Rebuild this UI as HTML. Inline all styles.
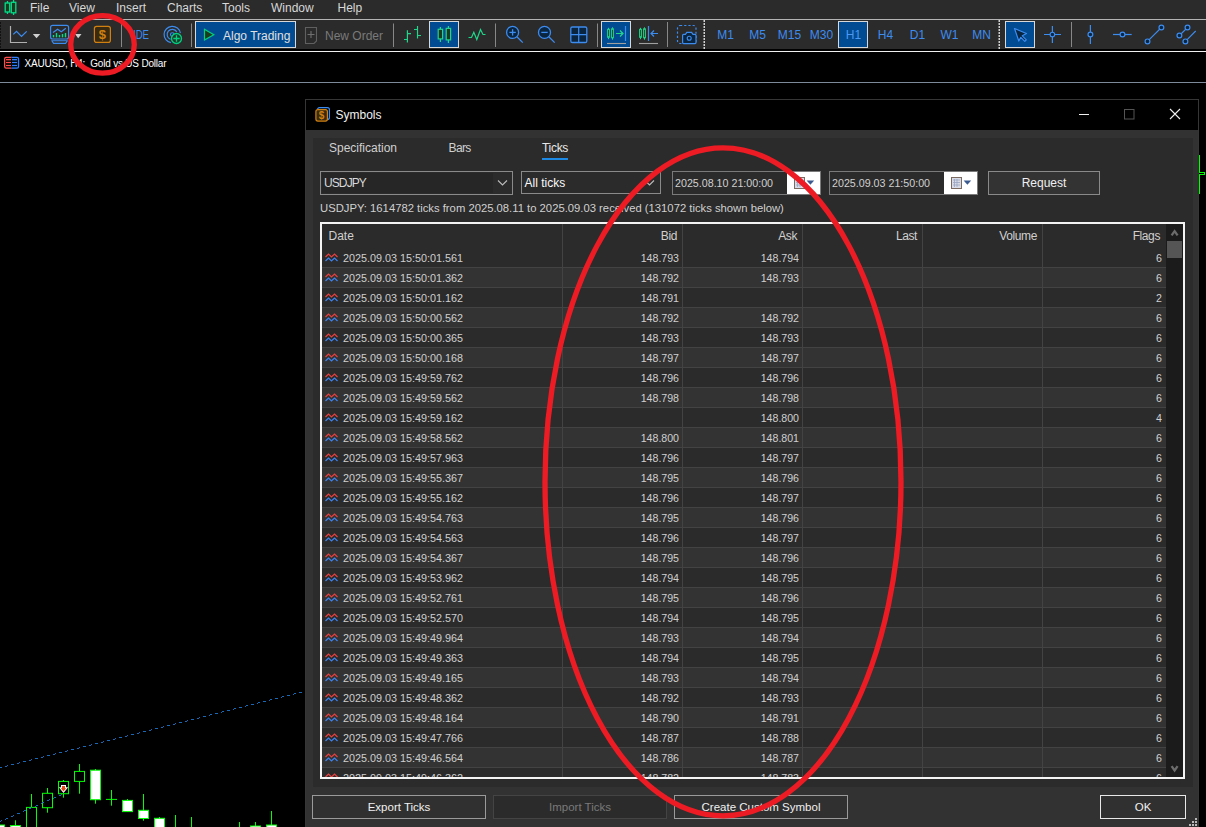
<!DOCTYPE html>
<html><head><meta charset="utf-8"><title>Symbols</title>
<style>
*{margin:0;padding:0;box-sizing:border-box}
html,body{width:1206px;height:827px;overflow:hidden;background:#000}
body{position:relative;font-family:"Liberation Sans",sans-serif;color:#ddd}
.ab{position:absolute}
.t{position:absolute;white-space:pre;line-height:1}
svg{position:absolute;overflow:visible}
</style></head><body>

<div class="ab" style="left:0;top:0;width:1206px;height:19px;background:#2b2b2b"></div>
<div class="ab" style="left:0;top:19px;width:1206px;height:1px;background:#b4b4b4"></div>
<div class="t" style="left:30px;top:2.4px;font-size:12px;color:#d8d8d8">File</div>
<div class="t" style="left:69px;top:2.4px;font-size:12px;color:#d8d8d8">View</div>
<div class="t" style="left:116px;top:2.4px;font-size:12px;color:#d8d8d8">Insert</div>
<div class="t" style="left:167px;top:2.4px;font-size:12px;color:#d8d8d8">Charts</div>
<div class="t" style="left:222px;top:2.4px;font-size:12px;color:#d8d8d8">Tools</div>
<div class="t" style="left:271px;top:2.4px;font-size:12px;color:#d8d8d8">Window</div>
<div class="t" style="left:337.5px;top:2.4px;font-size:12px;color:#d8d8d8">Help</div>
<svg style="left:0;top:0" width="20" height="18">
<g stroke="#00e08a" stroke-width="1.3" fill="#1e3a1e">
<rect x="5.2" y="3" width="4.5" height="9"/><line x1="7.45" y1="1" x2="7.45" y2="3"/><line x1="7.45" y1="12" x2="7.45" y2="14"/>
<rect x="11.3" y="2.3" width="4.5" height="10.5"/><line x1="13.55" y1="0" x2="13.55" y2="2.3"/><line x1="13.55" y1="12.8" x2="13.55" y2="15"/>
</g></svg>
<div class="ab" style="left:0;top:20px;width:1206px;height:29px;background:#2b2b2b"></div>
<div class="ab" style="left:0;top:51px;width:1206px;height:1px;background:#f0f0f0"></div>
<svg style="left:0;top:0" width="1206" height="52"><rect x="0" y="22" width="1" height="2" fill="#111"/><rect x="0" y="25" width="1" height="2" fill="#111"/><rect x="0" y="28" width="1" height="2" fill="#111"/><rect x="0" y="31" width="1" height="2" fill="#111"/><rect x="0" y="34" width="1" height="2" fill="#111"/><rect x="0" y="37" width="1" height="2" fill="#111"/><rect x="0" y="40" width="1" height="2" fill="#111"/><rect x="0" y="43" width="1" height="2" fill="#111"/><rect x="0" y="46" width="1" height="2" fill="#111"/><path d="M10.5 26 V42.5 H27" fill="none" stroke="#b0b0b0" stroke-width="1.2"/><path d="M13.3 34.4 L16.5 31.4 L21.5 36.4 L26.7 31.4" fill="none" stroke="#3c8cf0" stroke-width="1.3"/><path d="M32.8 34 H40.3 L36.5 38.2 Z" fill="#d0d0d0"/><rect x="50.6" y="25.4" width="18" height="13.6" rx="2" fill="none" stroke="#3c8cf0" stroke-width="1.2"/><path d="M51.8 40.8 H67.4 L65.6 43.4 H53.6 Z" fill="none" stroke="#3c8cf0" stroke-width="1.1" stroke-linejoin="round"/><path d="M53 32.6 L57.6 29.3 L61.3 31.7 L65.8 28.2" fill="none" stroke="#3c8cf0" stroke-width="1.2"/><rect x="52.8" y="35" width="1.4" height="2.299999999999997" fill="#00e08a"/><rect x="55.8" y="33" width="1.4" height="4.299999999999997" fill="#00e08a"/><rect x="58.8" y="35" width="1.4" height="2.299999999999997" fill="#00e08a"/><rect x="61.8" y="34" width="1.4" height="3.299999999999997" fill="#00e08a"/><rect x="64.8" y="33" width="1.4" height="4.299999999999997" fill="#00e08a"/><path d="M75 34 H81.5 L78.2 38.2 Z" fill="#d0d0d0"/><rect x="94.4" y="26.4" width="16" height="16" rx="2.2" fill="#3a2a10" stroke="#d08010" stroke-width="1.2"/><text x="102.4" y="39.3" font-family="Liberation Sans" font-size="13" font-weight="bold" fill="#d08010" text-anchor="middle">$</text><line x1="121.5" y1="23.5" x2="121.5" y2="47" stroke="#888" stroke-width="1"/><text x="133" y="39.2" font-family="Liberation Sans" font-size="12.5" fill="#3c8cf0" textLength="16" lengthAdjust="spacingAndGlyphs">IDE</text><path d="M170.88 42.58 A8.2 8.2 0 1 1 180.38 33.08" fill="none" stroke="#3c8cf0" stroke-width="1.2"/><path d="M170.52 39.39 A5.2 5.2 0 1 1 176.80 31.90" fill="none" stroke="#3c8cf0" stroke-width="1.2"/><circle cx="172.3" cy="34.5" r="1.8" fill="#0a2540" stroke="#3c8cf0" stroke-width="1.1"/><circle cx="176.5" cy="38.5" r="5" fill="#1e3a2a" stroke="#00d080" stroke-width="1.3"/><path d="M176.5 35.3 V41.7 M173.3 38.5 H179.7" stroke="#00d080" stroke-width="1.3"/><line x1="191.5" y1="23.5" x2="191.5" y2="47" stroke="#888" stroke-width="1"/><rect x="195.5" y="21.5" width="100" height="26" fill="#004b91" stroke="#d8d8d8" stroke-width="1"/><path d="M204.5 29.3 L213.8 34.7 L204.5 40 Z" fill="#1e3a1e" stroke="#00d080" stroke-width="1.2"/><text x="223" y="39.8" font-family="Liberation Sans" font-size="12" fill="#e0e0e0">Algo Trading</text><path d="M305.5 27.5 H316.5 V41 L314 43.5 H305.5 Z" fill="none" stroke="#606060" stroke-width="1.1"/><path d="M311 31 V38 M307.5 34.5 H314.5" stroke="#707070" stroke-width="1.1"/><text x="325" y="39.8" font-family="Liberation Sans" font-size="12" fill="#7a7a7a">New Order</text><line x1="393.5" y1="23.5" x2="393.5" y2="47" stroke="#888" stroke-width="1"/><path d="M407.4 30.3 V42.5 M404 39.5 H407.4 M407.4 33.6 H411 M417.5 26 V38.5 M414 29.5 H417.5 M417.5 35.5 H421" fill="none" stroke="#20d68a" stroke-width="1.2"/><rect x="429.5" y="21.5" width="29" height="26" fill="#004b91" stroke="#d8d8d8" stroke-width="1"/><path d="M440.4 27 V42 M448.4 26 V43" stroke="#20d68a" stroke-width="1.2"/><rect x="438.2" y="29.3" width="4.4" height="9.6" fill="#1e3a1e" stroke="#20d68a" stroke-width="1.2"/><rect x="446.2" y="28.4" width="4.4" height="11.5" fill="#1e3a1e" stroke="#20d68a" stroke-width="1.2"/><path d="M468.5 37.5 H471.5 L473.8 32.2 L476.8 39.5 L480.5 29.5 L483 34.5 H485.5" fill="none" stroke="#20d68a" stroke-width="1.2"/><line x1="495.5" y1="23.5" x2="495.5" y2="47" stroke="#888" stroke-width="1"/><line x1="516.9" y1="36.7" x2="522.8000000000001" y2="42.6" stroke="#3c8cf0" stroke-width="1.3"/><circle cx="512.6" cy="32.4" r="6" fill="#0a2540" stroke="#3c8cf0" stroke-width="1.3"/><path d="M509.40000000000003 32.4 H515.8000000000001" stroke="#3c8cf0" stroke-width="1.3"/><path d="M512.6 29.2 V35.6" stroke="#3c8cf0" stroke-width="1.3"/><line x1="548.8" y1="36.7" x2="554.7" y2="42.6" stroke="#3c8cf0" stroke-width="1.3"/><circle cx="544.5" cy="32.4" r="6" fill="#0a2540" stroke="#3c8cf0" stroke-width="1.3"/><path d="M541.3 32.4 H547.7" stroke="#3c8cf0" stroke-width="1.3"/><rect x="570.8" y="27" width="16" height="15.5" rx="1.6" fill="#0a2540" stroke="#3c8cf0" stroke-width="1.3"/><path d="M578.7 27 V42.5 M570.8 34.7 H586.8" stroke="#3c8cf0" stroke-width="1.2"/><line x1="597.5" y1="23.5" x2="597.5" y2="47" stroke="#888" stroke-width="1"/><rect x="601.5" y="21.5" width="29" height="26" fill="#004b91" stroke="#d8d8d8" stroke-width="1"/><path d="M608.5 27.8 V39.2 M612.5 27.3 V39.7" stroke="#20d68a" stroke-width="1"/><rect x="607.6" y="29.3" width="1.8" height="8" fill="#1e3a1e" stroke="#20d68a" stroke-width="1"/><rect x="611.6" y="28.8" width="1.8" height="9" fill="#1e3a1e" stroke="#20d68a" stroke-width="1"/><path d="M616 33.5 H623 M620 30.5 L623 33.5 L620 36.5" fill="none" stroke="#20d68a" stroke-width="1.2"/><line x1="625.5" y1="26" x2="625.5" y2="41" stroke="#3c8cf0" stroke-width="1.2"/><line x1="607" y1="43.5" x2="626" y2="43.5" stroke="#a0a0a0" stroke-width="1.1"/><path d="M640.5 27.8 V39.2 M644.5 27.3 V39.7" stroke="#20d68a" stroke-width="1"/><rect x="639.6" y="29.3" width="1.8" height="8" fill="#1e3a1e" stroke="#20d68a" stroke-width="1"/><rect x="643.6" y="28.8" width="1.8" height="9" fill="#1e3a1e" stroke="#20d68a" stroke-width="1"/><line x1="648.5" y1="26" x2="648.5" y2="41" stroke="#3c8cf0" stroke-width="1.2"/><path d="M651 33.5 H658 M654 30.5 L651 33.5 L654 36.5" fill="none" stroke="#3c8cf0" stroke-width="1.2"/><line x1="639" y1="43.5" x2="658" y2="43.5" stroke="#a0a0a0" stroke-width="1.1"/><line x1="667.5" y1="22" x2="667.5" y2="47" stroke="#888" stroke-width="1"/><rect x="677.5" y="25.5" width="18.5" height="18" rx="2.5" fill="none" stroke="#3c8cf0" stroke-width="1.2" stroke-dasharray="2.2 2"/><path d="M682.6 35.3 Q682.6 34.4 683.6 34.4 H685.4 L686.8 32.4 H691.6 L693 34.4 H695 Q696 34.4 696 35.4 V42.6 Q696 43.6 695 43.6 H683.6 Q682.6 43.6 682.6 42.6 Z" fill="#0a2540" stroke="#3c8cf0" stroke-width="1.2"/><circle cx="689.2" cy="38.3" r="2" fill="none" stroke="#3c8cf0" stroke-width="1.1"/><rect x="703.5" y="20" width="1.5" height="2" fill="#d0d0d0"/><rect x="703.5" y="23" width="1.5" height="2" fill="#d0d0d0"/><rect x="703.5" y="26" width="1.5" height="2" fill="#d0d0d0"/><rect x="703.5" y="29" width="1.5" height="2" fill="#d0d0d0"/><rect x="703.5" y="32" width="1.5" height="2" fill="#d0d0d0"/><rect x="703.5" y="35" width="1.5" height="2" fill="#d0d0d0"/><rect x="703.5" y="38" width="1.5" height="2" fill="#d0d0d0"/><rect x="703.5" y="41" width="1.5" height="2" fill="#d0d0d0"/><rect x="703.5" y="44" width="1.5" height="2" fill="#d0d0d0"/><rect x="703.5" y="47" width="1.5" height="2" fill="#d0d0d0"/><rect x="998.5" y="20" width="1.5" height="2" fill="#d0d0d0"/><rect x="998.5" y="23" width="1.5" height="2" fill="#d0d0d0"/><rect x="998.5" y="26" width="1.5" height="2" fill="#d0d0d0"/><rect x="998.5" y="29" width="1.5" height="2" fill="#d0d0d0"/><rect x="998.5" y="32" width="1.5" height="2" fill="#d0d0d0"/><rect x="998.5" y="35" width="1.5" height="2" fill="#d0d0d0"/><rect x="998.5" y="38" width="1.5" height="2" fill="#d0d0d0"/><rect x="998.5" y="41" width="1.5" height="2" fill="#d0d0d0"/><rect x="998.5" y="44" width="1.5" height="2" fill="#d0d0d0"/><rect x="998.5" y="47" width="1.5" height="2" fill="#d0d0d0"/><text x="725.5" y="39" font-family="Liberation Sans" font-size="12" fill="#3c8cf0" text-anchor="middle">M1</text><text x="757.5" y="39" font-family="Liberation Sans" font-size="12" fill="#3c8cf0" text-anchor="middle">M5</text><text x="789.5" y="39" font-family="Liberation Sans" font-size="12" fill="#3c8cf0" text-anchor="middle">M15</text><text x="821.5" y="39" font-family="Liberation Sans" font-size="12" fill="#3c8cf0" text-anchor="middle">M30</text><rect x="838.5" y="21.5" width="29" height="26" fill="#004b91" stroke="#d8d8d8" stroke-width="1"/><text x="853.5" y="39" font-family="Liberation Sans" font-size="12" fill="#4a9af5" text-anchor="middle">H1</text><text x="885.5" y="39" font-family="Liberation Sans" font-size="12" fill="#3c8cf0" text-anchor="middle">H4</text><text x="917.5" y="39" font-family="Liberation Sans" font-size="12" fill="#3c8cf0" text-anchor="middle">D1</text><text x="949.5" y="39" font-family="Liberation Sans" font-size="12" fill="#3c8cf0" text-anchor="middle">W1</text><text x="981.5" y="39" font-family="Liberation Sans" font-size="12" fill="#3c8cf0" text-anchor="middle">MN</text><rect x="1005.5" y="21.5" width="29" height="26" fill="#004b91" stroke="#d8d8d8" stroke-width="1"/><path d="M1014.5 28.5 L1026.5 33.5 L1022.3 35.8 L1026.3 39.8 L1024.8 41.3 L1020.8 37.3 L1018.8 41 Z" fill="#0a2540" stroke="#3c8cf0" stroke-width="1.2" stroke-linejoin="round"/><path d="M1044 34.5 H1061 M1052.4 26 V43" stroke="#3c8cf0" stroke-width="1.2"/><circle cx="1052.4" cy="34.5" r="2.3" fill="#0a2540" stroke="#3c8cf0" stroke-width="1.1"/><line x1="1071.5" y1="22" x2="1071.5" y2="47" stroke="#888" stroke-width="1"/><path d="M1090.4 25 V44" stroke="#3c8cf0" stroke-width="1.2"/><circle cx="1090.4" cy="34.5" r="2.4" fill="#0a2540" stroke="#3c8cf0" stroke-width="1.2"/><path d="M1113 34.5 H1131.7" stroke="#3c8cf0" stroke-width="1.2"/><circle cx="1122.5" cy="34.5" r="2.4" fill="#0a2540" stroke="#3c8cf0" stroke-width="1.2"/><path d="M1147.5 41.4 L1161.4 27.5" stroke="#3c8cf0" stroke-width="1.1"/><circle cx="1147.5" cy="41.4" r="2.4" fill="#0a2540" stroke="#3c8cf0" stroke-width="1.2"/><circle cx="1161.4" cy="27.5" r="2.4" fill="#0a2540" stroke="#3c8cf0" stroke-width="1.2"/><path d="M1179.4 35.5 L1187.5 27.5 M1185.4 41.4 L1195.7 31" stroke="#3c8cf0" stroke-width="1.1"/><circle cx="1179.4" cy="35.5" r="2.4" fill="#0a2540" stroke="#3c8cf0" stroke-width="1.2"/><circle cx="1187.5" cy="27.5" r="2.4" fill="#0a2540" stroke="#3c8cf0" stroke-width="1.2"/><circle cx="1185.4" cy="41.4" r="2.4" fill="#0a2540" stroke="#3c8cf0" stroke-width="1.2"/></svg>
<svg style="left:0;top:52px" width="22" height="20">
<defs><clipPath id="cl"><rect x="0" y="0" width="11.6" height="20"/></clipPath><clipPath id="cr"><rect x="11.6" y="0" width="11" height="20"/></clipPath></defs>
<rect x="4.6" y="5.3" width="14" height="10.8" rx="1.6" fill="#1a0a08" stroke="#ff5050" stroke-width="1.2" clip-path="url(#cl)"/>
<rect x="4.6" y="5.3" width="14" height="10.8" rx="1.6" fill="#001428" stroke="#3080ff" stroke-width="1.2" clip-path="url(#cr)"/>
<path d="M6 7.6 H11 M6 10.5 H11 M6 13.5 H11" stroke="#ff5050" stroke-width="1.1"/>
<path d="M12 7.6 H17 M12 10.5 H17 M12 13.5 H17" stroke="#3080ff" stroke-width="1.1"/>
</svg>
<div class="t" style="left:24.5px;top:59px;font-size:10px;color:#fff;letter-spacing:-0.2px">XAUUSD, H4:  Gold vs US Dollar</div>
<div class="ab" style="left:0;top:82px;width:1206px;height:1px;background:#7c8a9a"></div>
<svg style="left:0;top:0" width="1206" height="827"><line x1="-0.5" y1="822" x2="-0.5" y2="840" stroke="#00ff00" stroke-width="1"/><rect x="-5.5" y="825" width="10" height="15" fill="#fff" stroke="#00ff00" stroke-width="1"/><line x1="15.5" y1="820.3" x2="15.5" y2="840" stroke="#00ff00" stroke-width="1"/><rect x="10.5" y="825.6" width="10" height="14.399999999999977" fill="#fff" stroke="#00ff00" stroke-width="1"/><line x1="31.5" y1="794" x2="31.5" y2="840" stroke="#00ff00" stroke-width="1"/><rect x="26.5" y="807.4" width="10" height="32.60000000000002" fill="#000" stroke="#00ff00" stroke-width="1"/><line x1="47.5" y1="788" x2="47.5" y2="812.7" stroke="#00ff00" stroke-width="1"/><rect x="42.5" y="793.3" width="10" height="14.400000000000091" fill="#000" stroke="#00ff00" stroke-width="1"/><line x1="63.5" y1="780" x2="63.5" y2="797.7" stroke="#00ff00" stroke-width="1"/><rect x="58.5" y="781.4" width="10" height="12.300000000000068" fill="#000" stroke="#00ff00" stroke-width="1"/><line x1="79.5" y1="764" x2="79.5" y2="793.7" stroke="#00ff00" stroke-width="1"/><rect x="74.5" y="771.4" width="10" height="10.0" fill="#000" stroke="#00ff00" stroke-width="1"/><line x1="95.5" y1="769" x2="95.5" y2="803.7" stroke="#00ff00" stroke-width="1"/><rect x="90.5" y="770.2" width="10" height="29.5" fill="#fff" stroke="#00ff00" stroke-width="1"/><line x1="111.5" y1="790" x2="111.5" y2="805.7" stroke="#00ff00" stroke-width="1"/><line x1="106.0" y1="799.4" x2="117.0" y2="799.4" stroke="#00ff00" stroke-width="1"/><line x1="127.5" y1="799" x2="127.5" y2="811.6" stroke="#00ff00" stroke-width="1"/><rect x="122.5" y="800.4" width="10" height="11.200000000000045" fill="#fff" stroke="#00ff00" stroke-width="1"/><line x1="143.5" y1="794" x2="143.5" y2="820.7" stroke="#00ff00" stroke-width="1"/><rect x="138.5" y="810.3" width="10" height="8.200000000000045" fill="#fff" stroke="#00ff00" stroke-width="1"/><line x1="159.5" y1="817" x2="159.5" y2="840" stroke="#00ff00" stroke-width="1"/><rect x="154.5" y="818.3" width="10" height="21.700000000000045" fill="#fff" stroke="#00ff00" stroke-width="1"/><line x1="175.5" y1="815" x2="175.5" y2="840" stroke="#00ff00" stroke-width="1"/><rect x="170.5" y="840" width="10" height="0" fill="#000" stroke="#00ff00" stroke-width="1"/><line x1="191.5" y1="817" x2="191.5" y2="840" stroke="#00ff00" stroke-width="1"/><rect x="186.5" y="840" width="10" height="0" fill="#000" stroke="#00ff00" stroke-width="1"/><line x1="239.5" y1="822" x2="239.5" y2="840" stroke="#00ff00" stroke-width="1"/><rect x="234.5" y="840" width="10" height="0" fill="#000" stroke="#00ff00" stroke-width="1"/><line x1="255.5" y1="822" x2="255.5" y2="840" stroke="#00ff00" stroke-width="1"/><rect x="250.5" y="826" width="10" height="14" fill="#fff" stroke="#00ff00" stroke-width="1"/><line x1="271.5" y1="811" x2="271.5" y2="840" stroke="#00ff00" stroke-width="1"/><rect x="266.5" y="825" width="10" height="15" fill="#fff" stroke="#00ff00" stroke-width="1"/><path d="M0 767h1v1h-1zM1 767h1v1h-1zM5 766h1v1h-1zM6 766h1v1h-1zM7 765h1v1h-1zM11 764h1v1h-1zM12 764h1v1h-1zM13 764h1v1h-1zM17 763h1v1h-1zM18 763h1v1h-1zM19 762h1v1h-1zM23 761h1v1h-1zM24 761h1v1h-1zM25 761h1v1h-1zM29 760h1v1h-1zM30 760h1v1h-1zM31 759h1v1h-1zM35 758h1v1h-1zM36 758h1v1h-1zM37 758h1v1h-1zM41 757h1v1h-1zM42 757h1v1h-1zM43 756h1v1h-1zM47 755h1v1h-1zM48 755h1v1h-1zM49 755h1v1h-1zM53 754h1v1h-1zM54 754h1v1h-1zM55 753h1v1h-1zM59 752h1v1h-1zM60 752h1v1h-1zM61 752h1v1h-1zM65 751h1v1h-1zM66 751h1v1h-1zM67 750h1v1h-1zM71 749h1v1h-1zM72 749h1v1h-1zM73 749h1v1h-1zM77 748h1v1h-1zM78 748h1v1h-1zM79 747h1v1h-1zM83 746h1v1h-1zM84 746h1v1h-1zM85 746h1v1h-1zM89 745h1v1h-1zM90 745h1v1h-1zM91 744h1v1h-1zM95 743h1v1h-1zM96 743h1v1h-1zM97 743h1v1h-1zM101 742h1v1h-1zM102 742h1v1h-1zM103 741h1v1h-1zM107 740h1v1h-1zM108 740h1v1h-1zM109 740h1v1h-1zM113 739h1v1h-1zM114 739h1v1h-1zM115 738h1v1h-1zM119 737h1v1h-1zM120 737h1v1h-1zM121 737h1v1h-1zM125 736h1v1h-1zM126 736h1v1h-1zM127 735h1v1h-1zM131 734h1v1h-1zM132 734h1v1h-1zM133 734h1v1h-1zM137 733h1v1h-1zM138 733h1v1h-1zM139 732h1v1h-1zM143 731h1v1h-1zM144 731h1v1h-1zM145 731h1v1h-1zM149 730h1v1h-1zM150 730h1v1h-1zM151 729h1v1h-1zM155 728h1v1h-1zM156 728h1v1h-1zM157 728h1v1h-1zM161 727h1v1h-1zM162 727h1v1h-1zM163 726h1v1h-1zM167 725h1v1h-1zM168 725h1v1h-1zM169 725h1v1h-1zM173 724h1v1h-1zM174 724h1v1h-1zM175 723h1v1h-1zM179 722h1v1h-1zM180 722h1v1h-1zM181 722h1v1h-1zM185 721h1v1h-1zM186 721h1v1h-1zM187 720h1v1h-1zM191 719h1v1h-1zM192 719h1v1h-1zM193 719h1v1h-1zM197 718h1v1h-1zM198 718h1v1h-1zM199 717h1v1h-1zM203 716h1v1h-1zM204 716h1v1h-1zM205 716h1v1h-1zM209 715h1v1h-1zM210 714h1v1h-1zM211 714h1v1h-1zM215 713h1v1h-1zM216 713h1v1h-1zM217 713h1v1h-1zM221 712h1v1h-1zM222 711h1v1h-1zM223 711h1v1h-1zM227 710h1v1h-1zM228 710h1v1h-1zM229 710h1v1h-1zM233 709h1v1h-1zM234 708h1v1h-1zM235 708h1v1h-1zM239 707h1v1h-1zM240 707h1v1h-1zM241 707h1v1h-1zM245 706h1v1h-1zM246 705h1v1h-1zM247 705h1v1h-1zM251 704h1v1h-1zM252 704h1v1h-1zM253 704h1v1h-1zM257 703h1v1h-1zM258 702h1v1h-1zM259 702h1v1h-1zM263 701h1v1h-1zM264 701h1v1h-1zM265 701h1v1h-1zM269 700h1v1h-1zM270 699h1v1h-1zM271 699h1v1h-1zM275 698h1v1h-1zM276 698h1v1h-1zM277 698h1v1h-1zM281 697h1v1h-1zM282 696h1v1h-1zM283 696h1v1h-1zM287 695h1v1h-1zM288 695h1v1h-1zM289 695h1v1h-1zM293 694h1v1h-1zM294 693h1v1h-1zM295 693h1v1h-1zM299 692h1v1h-1zM300 692h1v1h-1zM301 692h1v1h-1zM0 821h1v1h-1zM1 820h1v1h-1zM5 819h1v1h-1zM6 818h1v1h-1zM7 818h1v1h-1zM11 816h1v1h-1zM12 816h1v1h-1zM13 815h1v1h-1zM17 813h1v1h-1zM18 813h1v1h-1zM19 813h1v1h-1zM23 811h1v1h-1zM24 810h1v1h-1zM25 810h1v1h-1zM29 808h1v1h-1zM30 808h1v1h-1zM31 807h1v1h-1zM35 806h1v1h-1zM36 805h1v1h-1zM37 805h1v1h-1zM41 803h1v1h-1zM42 802h1v1h-1zM43 802h1v1h-1zM47 800h1v1h-1zM48 800h1v1h-1zM49 799h1v1h-1zM53 798h1v1h-1zM54 797h1v1h-1zM55 797h1v1h-1zM59 795h1v1h-1zM60 795h1v1h-1zM61 794h1v1h-1z" fill="#1868b8"/><path d="M61 785 H66 V787.3 H68.2 L63.5 793 L58.8 787.3 H61 Z" fill="#fff"/><path d="M62 786 H65 V788.3 H66.2 L63.5 791.6 L60.8 788.3 H62 Z" fill="#e84818"/><line x1="1199.5" y1="155" x2="1199.5" y2="194" stroke="#00ff00" stroke-width="1"/><rect x="1194.5" y="172.5" width="10" height="2" fill="#000" stroke="#00ff00" stroke-width="1"/></svg>
<div class="ab" style="left:305px;top:99px;width:894px;height:740px;background:#323232;border:1px solid #363636"></div>
<div class="ab" style="left:306px;top:100px;width:892px;height:30px;background:#000"></div>
<div class="ab" style="left:313px;top:138px;width:880px;height:649px;background:#2b2b2b"></div>
<svg style="left:310px;top:102px" width="30" height="26">
<rect x="7.6" y="5.6" width="11.8" height="11.8" rx="2" fill="#000" stroke="#3c8cf0" stroke-width="1.2"/>
<rect x="5.9" y="7.6" width="11.5" height="11.5" rx="2" fill="#3a2a10" stroke="#d08010" stroke-width="1.2"/>
<text x="11.65" y="17.2" font-family="Liberation Sans" font-size="10" font-weight="bold" fill="#d08010" text-anchor="middle">$</text>
</svg>
<div class="t" style="left:335.5px;top:109px;font-size:12px;color:#f0f0f0">Symbols</div>
<svg style="left:1060px;top:100px" width="138" height="30">
<line x1="1079" y1="114.5" x2="1089" y2="114.5" stroke="#f0f0f0" stroke-width="1" transform="translate(-1060,-100)"/>
<rect x="1124.5" y="109.5" width="9.5" height="9.5" fill="none" stroke="#555" stroke-width="1" transform="translate(-1060,-100)"/>
<path d="M1170 109 L1180 119 M1180 109 L1170 119" stroke="#f0f0f0" stroke-width="1.1" transform="translate(-1060,-100)"/>
</svg>
<div class="t" style="left:329px;top:142px;font-size:12px;color:#d0d0d0">Specification</div>
<div class="t" style="left:448.5px;top:142px;font-size:12px;letter-spacing:-0.6px;color:#d0d0d0">Bars</div>
<div class="t" style="left:542px;top:142px;font-size:12px;letter-spacing:-0.3px;color:#e8e8e8">Ticks</div>
<div class="ab" style="left:542px;top:158px;width:26px;height:2px;background:#1e88e5"></div>
<div class="ab" style="left:320px;top:171px;width:193px;height:24px;border:1px solid #8a8a8a;background:#2b2b2b"></div>
<div class="ab" style="left:322px;top:173px;width:171px;height:20px;background:#262626"></div>
<div class="t" style="left:324px;top:177px;font-size:12px;letter-spacing:-0.9px;color:#d8d8d8">USDJPY</div>
<svg style="left:496px;top:178px" width="14" height="10"><path d="M2 2.5 L6.5 7 L11 2.5" fill="none" stroke="#bbb" stroke-width="1.1"/></svg>
<div class="ab" style="left:521px;top:171px;width:140px;height:23px;border:1px solid #8a8a8a;background:#2b2b2b"></div>
<div class="t" style="left:524.5px;top:177px;font-size:12px;color:#fafafa">All ticks</div>
<svg style="left:643px;top:178px" width="14" height="10"><path d="M2 2.5 L6.5 7 L11 2.5" fill="none" stroke="#bbb" stroke-width="1.1"/></svg>
<div class="ab" style="left:672px;top:171px;width:149px;height:24px;border:1px solid #7a7a7a;background:#2b2b2b"></div>
<div class="ab" style="left:787px;top:172px;width:33px;height:22px;background:#fff"></div>
<div class="t" style="left:675px;top:178px;font-size:10.7px;color:#d0d0d0">2025.08.10 21:00:00</div>
<svg style="left:787px;top:172px" width="33" height="22">
<rect x="7.5" y="5.5" width="10" height="11" fill="#d8dce8" stroke="#7a6a60" stroke-width="1"/>
<path d="M9 8 H16 M9 10.5 H16 M9 13 H16 M10.5 7 V15 M13 7 V15" stroke="#9aa4c0" stroke-width="0.8"/>
<path d="M19.6 8.6 H27.2 L23.4 12.8 Z" fill="#3a5a90"/>
</svg>
<div class="ab" style="left:829px;top:171px;width:149px;height:24px;border:1px solid #7a7a7a;background:#2b2b2b"></div>
<div class="ab" style="left:944px;top:172px;width:33px;height:22px;background:#fff"></div>
<div class="t" style="left:832px;top:178px;font-size:10.7px;color:#d0d0d0">2025.09.03 21:50:00</div>
<svg style="left:944px;top:172px" width="33" height="22">
<rect x="7.5" y="5.5" width="10" height="11" fill="#d8dce8" stroke="#7a6a60" stroke-width="1"/>
<path d="M9 8 H16 M9 10.5 H16 M9 13 H16 M10.5 7 V15 M13 7 V15" stroke="#9aa4c0" stroke-width="0.8"/>
<path d="M19.6 8.6 H27.2 L23.4 12.8 Z" fill="#3a5a90"/>
</svg>
<div class="ab" style="left:988px;top:171px;width:112px;height:24px;border:1px solid #8a8a8a;background:#333"></div>
<div class="t" style="left:988px;top:177px;width:112px;text-align:center;font-size:12px;color:#f0f0f0">Request</div>
<div class="t" style="left:320px;top:203px;font-size:11.27px;color:#d0d0d0">USDJPY: 1614782 ticks from 2025.08.11 to 2025.09.03 received (131072 ticks shown below)</div>
<div class="ab" style="left:320px;top:222px;width:865px;height:557px;border:2px solid #f4f4f4;background:#2b2b2b;overflow:hidden">
<div class="ab" style="left:0;top:23px;width:844px;height:20px;background:#2b2b2b"></div><div class="ab" style="left:0;top:43px;width:844px;height:20px;background:#333333"></div><div class="ab" style="left:0;top:63px;width:844px;height:20px;background:#2b2b2b"></div><div class="ab" style="left:0;top:83px;width:844px;height:20px;background:#333333"></div><div class="ab" style="left:0;top:103px;width:844px;height:20px;background:#2b2b2b"></div><div class="ab" style="left:0;top:123px;width:844px;height:20px;background:#333333"></div><div class="ab" style="left:0;top:143px;width:844px;height:20px;background:#2b2b2b"></div><div class="ab" style="left:0;top:163px;width:844px;height:20px;background:#333333"></div><div class="ab" style="left:0;top:183px;width:844px;height:20px;background:#2b2b2b"></div><div class="ab" style="left:0;top:203px;width:844px;height:20px;background:#333333"></div><div class="ab" style="left:0;top:223px;width:844px;height:20px;background:#2b2b2b"></div><div class="ab" style="left:0;top:243px;width:844px;height:20px;background:#333333"></div><div class="ab" style="left:0;top:263px;width:844px;height:20px;background:#2b2b2b"></div><div class="ab" style="left:0;top:283px;width:844px;height:20px;background:#333333"></div><div class="ab" style="left:0;top:303px;width:844px;height:20px;background:#2b2b2b"></div><div class="ab" style="left:0;top:323px;width:844px;height:20px;background:#333333"></div><div class="ab" style="left:0;top:343px;width:844px;height:20px;background:#2b2b2b"></div><div class="ab" style="left:0;top:363px;width:844px;height:20px;background:#333333"></div><div class="ab" style="left:0;top:383px;width:844px;height:20px;background:#2b2b2b"></div><div class="ab" style="left:0;top:403px;width:844px;height:20px;background:#333333"></div><div class="ab" style="left:0;top:423px;width:844px;height:20px;background:#2b2b2b"></div><div class="ab" style="left:0;top:443px;width:844px;height:20px;background:#333333"></div><div class="ab" style="left:0;top:463px;width:844px;height:20px;background:#2b2b2b"></div><div class="ab" style="left:0;top:483px;width:844px;height:20px;background:#333333"></div><div class="ab" style="left:0;top:503px;width:844px;height:20px;background:#2b2b2b"></div><div class="ab" style="left:0;top:523px;width:844px;height:20px;background:#333333"></div><div class="ab" style="left:0;top:543px;width:844px;height:20px;background:#2b2b2b"></div><div class="ab" style="left:0;top:43px;width:844px;height:1px;background:#434343"></div><div class="ab" style="left:0;top:63px;width:844px;height:1px;background:#434343"></div><div class="ab" style="left:0;top:83px;width:844px;height:1px;background:#434343"></div><div class="ab" style="left:0;top:103px;width:844px;height:1px;background:#434343"></div><div class="ab" style="left:0;top:123px;width:844px;height:1px;background:#434343"></div><div class="ab" style="left:0;top:143px;width:844px;height:1px;background:#434343"></div><div class="ab" style="left:0;top:163px;width:844px;height:1px;background:#434343"></div><div class="ab" style="left:0;top:183px;width:844px;height:1px;background:#434343"></div><div class="ab" style="left:0;top:203px;width:844px;height:1px;background:#434343"></div><div class="ab" style="left:0;top:223px;width:844px;height:1px;background:#434343"></div><div class="ab" style="left:0;top:243px;width:844px;height:1px;background:#434343"></div><div class="ab" style="left:0;top:263px;width:844px;height:1px;background:#434343"></div><div class="ab" style="left:0;top:283px;width:844px;height:1px;background:#434343"></div><div class="ab" style="left:0;top:303px;width:844px;height:1px;background:#434343"></div><div class="ab" style="left:0;top:323px;width:844px;height:1px;background:#434343"></div><div class="ab" style="left:0;top:343px;width:844px;height:1px;background:#434343"></div><div class="ab" style="left:0;top:363px;width:844px;height:1px;background:#434343"></div><div class="ab" style="left:0;top:383px;width:844px;height:1px;background:#434343"></div><div class="ab" style="left:0;top:403px;width:844px;height:1px;background:#434343"></div><div class="ab" style="left:0;top:423px;width:844px;height:1px;background:#434343"></div><div class="ab" style="left:0;top:443px;width:844px;height:1px;background:#434343"></div><div class="ab" style="left:0;top:463px;width:844px;height:1px;background:#434343"></div><div class="ab" style="left:0;top:483px;width:844px;height:1px;background:#434343"></div><div class="ab" style="left:0;top:503px;width:844px;height:1px;background:#434343"></div><div class="ab" style="left:0;top:523px;width:844px;height:1px;background:#434343"></div><div class="ab" style="left:0;top:543px;width:844px;height:1px;background:#434343"></div><div class="ab" style="left:0;top:563px;width:844px;height:1px;background:#434343"></div><div class="ab" style="left:240px;top:0;width:1px;height:560px;background:#434343"></div><div class="ab" style="left:360px;top:0;width:1px;height:560px;background:#434343"></div><div class="ab" style="left:480px;top:0;width:1px;height:560px;background:#434343"></div><div class="ab" style="left:600px;top:0;width:1px;height:560px;background:#434343"></div><div class="ab" style="left:720px;top:0;width:1px;height:560px;background:#434343"></div><div class="t" style="left:6.5px;top:6px;font-size:12px;color:#d0d0d0">Date</div><div class="t" style="left:155px;width:200px;text-align:right;top:6px;font-size:12px;letter-spacing:-0.4px;color:#d0d0d0">Bid</div><div class="t" style="left:275px;width:200px;text-align:right;top:6px;font-size:12px;letter-spacing:-0.4px;color:#d0d0d0">Ask</div><div class="t" style="left:395px;width:200px;text-align:right;top:6px;font-size:12px;letter-spacing:-0.4px;color:#d0d0d0">Last</div><div class="t" style="left:515px;width:200px;text-align:right;top:6px;font-size:12px;letter-spacing:-0.4px;color:#d0d0d0">Volume</div><div class="t" style="left:638px;width:200px;text-align:right;top:6px;font-size:12px;letter-spacing:-0.4px;color:#d0d0d0">Flags</div><svg style="left:2px;top:29px" width="16" height="10"><path d="M1.5 4 L4.5 1 L7.5 4 L10.5 1 L13.5 4" fill="none" stroke="#e84040" stroke-width="1.2"/><path d="M1.5 8 L4.5 5 L7.5 8 L10.5 5 L13.5 8" fill="none" stroke="#3c82f0" stroke-width="1.2"/></svg><div class="t" style="left:21px;top:29px;font-size:10.8px;color:#d0d0d0">2025.09.03 15:50:01.561</div><div class="t" style="left:257px;width:100px;text-align:right;top:29px;font-size:10.6px;color:#d0d0d0">148.793</div><div class="t" style="left:377px;width:100px;text-align:right;top:29px;font-size:10.6px;color:#d0d0d0">148.794</div><div class="t" style="left:740px;width:100px;text-align:right;top:29px;font-size:10.6px;color:#d0d0d0">6</div><svg style="left:2px;top:49px" width="16" height="10"><path d="M1.5 4 L4.5 1 L7.5 4 L10.5 1 L13.5 4" fill="none" stroke="#e84040" stroke-width="1.2"/><path d="M1.5 8 L4.5 5 L7.5 8 L10.5 5 L13.5 8" fill="none" stroke="#3c82f0" stroke-width="1.2"/></svg><div class="t" style="left:21px;top:49px;font-size:10.8px;color:#d0d0d0">2025.09.03 15:50:01.362</div><div class="t" style="left:257px;width:100px;text-align:right;top:49px;font-size:10.6px;color:#d0d0d0">148.792</div><div class="t" style="left:377px;width:100px;text-align:right;top:49px;font-size:10.6px;color:#d0d0d0">148.793</div><div class="t" style="left:740px;width:100px;text-align:right;top:49px;font-size:10.6px;color:#d0d0d0">6</div><svg style="left:2px;top:69px" width="16" height="10"><path d="M1.5 4 L4.5 1 L7.5 4 L10.5 1 L13.5 4" fill="none" stroke="#e84040" stroke-width="1.2"/><path d="M1.5 8 L4.5 5 L7.5 8 L10.5 5 L13.5 8" fill="none" stroke="#3c82f0" stroke-width="1.2"/></svg><div class="t" style="left:21px;top:69px;font-size:10.8px;color:#d0d0d0">2025.09.03 15:50:01.162</div><div class="t" style="left:257px;width:100px;text-align:right;top:69px;font-size:10.6px;color:#d0d0d0">148.791</div><div class="t" style="left:740px;width:100px;text-align:right;top:69px;font-size:10.6px;color:#d0d0d0">2</div><svg style="left:2px;top:89px" width="16" height="10"><path d="M1.5 4 L4.5 1 L7.5 4 L10.5 1 L13.5 4" fill="none" stroke="#e84040" stroke-width="1.2"/><path d="M1.5 8 L4.5 5 L7.5 8 L10.5 5 L13.5 8" fill="none" stroke="#3c82f0" stroke-width="1.2"/></svg><div class="t" style="left:21px;top:89px;font-size:10.8px;color:#d0d0d0">2025.09.03 15:50:00.562</div><div class="t" style="left:257px;width:100px;text-align:right;top:89px;font-size:10.6px;color:#d0d0d0">148.792</div><div class="t" style="left:377px;width:100px;text-align:right;top:89px;font-size:10.6px;color:#d0d0d0">148.792</div><div class="t" style="left:740px;width:100px;text-align:right;top:89px;font-size:10.6px;color:#d0d0d0">6</div><svg style="left:2px;top:109px" width="16" height="10"><path d="M1.5 4 L4.5 1 L7.5 4 L10.5 1 L13.5 4" fill="none" stroke="#e84040" stroke-width="1.2"/><path d="M1.5 8 L4.5 5 L7.5 8 L10.5 5 L13.5 8" fill="none" stroke="#3c82f0" stroke-width="1.2"/></svg><div class="t" style="left:21px;top:109px;font-size:10.8px;color:#d0d0d0">2025.09.03 15:50:00.365</div><div class="t" style="left:257px;width:100px;text-align:right;top:109px;font-size:10.6px;color:#d0d0d0">148.793</div><div class="t" style="left:377px;width:100px;text-align:right;top:109px;font-size:10.6px;color:#d0d0d0">148.793</div><div class="t" style="left:740px;width:100px;text-align:right;top:109px;font-size:10.6px;color:#d0d0d0">6</div><svg style="left:2px;top:129px" width="16" height="10"><path d="M1.5 4 L4.5 1 L7.5 4 L10.5 1 L13.5 4" fill="none" stroke="#e84040" stroke-width="1.2"/><path d="M1.5 8 L4.5 5 L7.5 8 L10.5 5 L13.5 8" fill="none" stroke="#3c82f0" stroke-width="1.2"/></svg><div class="t" style="left:21px;top:129px;font-size:10.8px;color:#d0d0d0">2025.09.03 15:50:00.168</div><div class="t" style="left:257px;width:100px;text-align:right;top:129px;font-size:10.6px;color:#d0d0d0">148.797</div><div class="t" style="left:377px;width:100px;text-align:right;top:129px;font-size:10.6px;color:#d0d0d0">148.797</div><div class="t" style="left:740px;width:100px;text-align:right;top:129px;font-size:10.6px;color:#d0d0d0">6</div><svg style="left:2px;top:149px" width="16" height="10"><path d="M1.5 4 L4.5 1 L7.5 4 L10.5 1 L13.5 4" fill="none" stroke="#e84040" stroke-width="1.2"/><path d="M1.5 8 L4.5 5 L7.5 8 L10.5 5 L13.5 8" fill="none" stroke="#3c82f0" stroke-width="1.2"/></svg><div class="t" style="left:21px;top:149px;font-size:10.8px;color:#d0d0d0">2025.09.03 15:49:59.762</div><div class="t" style="left:257px;width:100px;text-align:right;top:149px;font-size:10.6px;color:#d0d0d0">148.796</div><div class="t" style="left:377px;width:100px;text-align:right;top:149px;font-size:10.6px;color:#d0d0d0">148.796</div><div class="t" style="left:740px;width:100px;text-align:right;top:149px;font-size:10.6px;color:#d0d0d0">6</div><svg style="left:2px;top:169px" width="16" height="10"><path d="M1.5 4 L4.5 1 L7.5 4 L10.5 1 L13.5 4" fill="none" stroke="#e84040" stroke-width="1.2"/><path d="M1.5 8 L4.5 5 L7.5 8 L10.5 5 L13.5 8" fill="none" stroke="#3c82f0" stroke-width="1.2"/></svg><div class="t" style="left:21px;top:169px;font-size:10.8px;color:#d0d0d0">2025.09.03 15:49:59.562</div><div class="t" style="left:257px;width:100px;text-align:right;top:169px;font-size:10.6px;color:#d0d0d0">148.798</div><div class="t" style="left:377px;width:100px;text-align:right;top:169px;font-size:10.6px;color:#d0d0d0">148.798</div><div class="t" style="left:740px;width:100px;text-align:right;top:169px;font-size:10.6px;color:#d0d0d0">6</div><svg style="left:2px;top:189px" width="16" height="10"><path d="M1.5 4 L4.5 1 L7.5 4 L10.5 1 L13.5 4" fill="none" stroke="#e84040" stroke-width="1.2"/><path d="M1.5 8 L4.5 5 L7.5 8 L10.5 5 L13.5 8" fill="none" stroke="#3c82f0" stroke-width="1.2"/></svg><div class="t" style="left:21px;top:189px;font-size:10.8px;color:#d0d0d0">2025.09.03 15:49:59.162</div><div class="t" style="left:377px;width:100px;text-align:right;top:189px;font-size:10.6px;color:#d0d0d0">148.800</div><div class="t" style="left:740px;width:100px;text-align:right;top:189px;font-size:10.6px;color:#d0d0d0">4</div><svg style="left:2px;top:209px" width="16" height="10"><path d="M1.5 4 L4.5 1 L7.5 4 L10.5 1 L13.5 4" fill="none" stroke="#e84040" stroke-width="1.2"/><path d="M1.5 8 L4.5 5 L7.5 8 L10.5 5 L13.5 8" fill="none" stroke="#3c82f0" stroke-width="1.2"/></svg><div class="t" style="left:21px;top:209px;font-size:10.8px;color:#d0d0d0">2025.09.03 15:49:58.562</div><div class="t" style="left:257px;width:100px;text-align:right;top:209px;font-size:10.6px;color:#d0d0d0">148.800</div><div class="t" style="left:377px;width:100px;text-align:right;top:209px;font-size:10.6px;color:#d0d0d0">148.801</div><div class="t" style="left:740px;width:100px;text-align:right;top:209px;font-size:10.6px;color:#d0d0d0">6</div><svg style="left:2px;top:229px" width="16" height="10"><path d="M1.5 4 L4.5 1 L7.5 4 L10.5 1 L13.5 4" fill="none" stroke="#e84040" stroke-width="1.2"/><path d="M1.5 8 L4.5 5 L7.5 8 L10.5 5 L13.5 8" fill="none" stroke="#3c82f0" stroke-width="1.2"/></svg><div class="t" style="left:21px;top:229px;font-size:10.8px;color:#d0d0d0">2025.09.03 15:49:57.963</div><div class="t" style="left:257px;width:100px;text-align:right;top:229px;font-size:10.6px;color:#d0d0d0">148.796</div><div class="t" style="left:377px;width:100px;text-align:right;top:229px;font-size:10.6px;color:#d0d0d0">148.797</div><div class="t" style="left:740px;width:100px;text-align:right;top:229px;font-size:10.6px;color:#d0d0d0">6</div><svg style="left:2px;top:249px" width="16" height="10"><path d="M1.5 4 L4.5 1 L7.5 4 L10.5 1 L13.5 4" fill="none" stroke="#e84040" stroke-width="1.2"/><path d="M1.5 8 L4.5 5 L7.5 8 L10.5 5 L13.5 8" fill="none" stroke="#3c82f0" stroke-width="1.2"/></svg><div class="t" style="left:21px;top:249px;font-size:10.8px;color:#d0d0d0">2025.09.03 15:49:55.367</div><div class="t" style="left:257px;width:100px;text-align:right;top:249px;font-size:10.6px;color:#d0d0d0">148.795</div><div class="t" style="left:377px;width:100px;text-align:right;top:249px;font-size:10.6px;color:#d0d0d0">148.796</div><div class="t" style="left:740px;width:100px;text-align:right;top:249px;font-size:10.6px;color:#d0d0d0">6</div><svg style="left:2px;top:269px" width="16" height="10"><path d="M1.5 4 L4.5 1 L7.5 4 L10.5 1 L13.5 4" fill="none" stroke="#e84040" stroke-width="1.2"/><path d="M1.5 8 L4.5 5 L7.5 8 L10.5 5 L13.5 8" fill="none" stroke="#3c82f0" stroke-width="1.2"/></svg><div class="t" style="left:21px;top:269px;font-size:10.8px;color:#d0d0d0">2025.09.03 15:49:55.162</div><div class="t" style="left:257px;width:100px;text-align:right;top:269px;font-size:10.6px;color:#d0d0d0">148.796</div><div class="t" style="left:377px;width:100px;text-align:right;top:269px;font-size:10.6px;color:#d0d0d0">148.797</div><div class="t" style="left:740px;width:100px;text-align:right;top:269px;font-size:10.6px;color:#d0d0d0">6</div><svg style="left:2px;top:289px" width="16" height="10"><path d="M1.5 4 L4.5 1 L7.5 4 L10.5 1 L13.5 4" fill="none" stroke="#e84040" stroke-width="1.2"/><path d="M1.5 8 L4.5 5 L7.5 8 L10.5 5 L13.5 8" fill="none" stroke="#3c82f0" stroke-width="1.2"/></svg><div class="t" style="left:21px;top:289px;font-size:10.8px;color:#d0d0d0">2025.09.03 15:49:54.763</div><div class="t" style="left:257px;width:100px;text-align:right;top:289px;font-size:10.6px;color:#d0d0d0">148.795</div><div class="t" style="left:377px;width:100px;text-align:right;top:289px;font-size:10.6px;color:#d0d0d0">148.796</div><div class="t" style="left:740px;width:100px;text-align:right;top:289px;font-size:10.6px;color:#d0d0d0">6</div><svg style="left:2px;top:309px" width="16" height="10"><path d="M1.5 4 L4.5 1 L7.5 4 L10.5 1 L13.5 4" fill="none" stroke="#e84040" stroke-width="1.2"/><path d="M1.5 8 L4.5 5 L7.5 8 L10.5 5 L13.5 8" fill="none" stroke="#3c82f0" stroke-width="1.2"/></svg><div class="t" style="left:21px;top:309px;font-size:10.8px;color:#d0d0d0">2025.09.03 15:49:54.563</div><div class="t" style="left:257px;width:100px;text-align:right;top:309px;font-size:10.6px;color:#d0d0d0">148.796</div><div class="t" style="left:377px;width:100px;text-align:right;top:309px;font-size:10.6px;color:#d0d0d0">148.797</div><div class="t" style="left:740px;width:100px;text-align:right;top:309px;font-size:10.6px;color:#d0d0d0">6</div><svg style="left:2px;top:329px" width="16" height="10"><path d="M1.5 4 L4.5 1 L7.5 4 L10.5 1 L13.5 4" fill="none" stroke="#e84040" stroke-width="1.2"/><path d="M1.5 8 L4.5 5 L7.5 8 L10.5 5 L13.5 8" fill="none" stroke="#3c82f0" stroke-width="1.2"/></svg><div class="t" style="left:21px;top:329px;font-size:10.8px;color:#d0d0d0">2025.09.03 15:49:54.367</div><div class="t" style="left:257px;width:100px;text-align:right;top:329px;font-size:10.6px;color:#d0d0d0">148.795</div><div class="t" style="left:377px;width:100px;text-align:right;top:329px;font-size:10.6px;color:#d0d0d0">148.796</div><div class="t" style="left:740px;width:100px;text-align:right;top:329px;font-size:10.6px;color:#d0d0d0">6</div><svg style="left:2px;top:349px" width="16" height="10"><path d="M1.5 4 L4.5 1 L7.5 4 L10.5 1 L13.5 4" fill="none" stroke="#e84040" stroke-width="1.2"/><path d="M1.5 8 L4.5 5 L7.5 8 L10.5 5 L13.5 8" fill="none" stroke="#3c82f0" stroke-width="1.2"/></svg><div class="t" style="left:21px;top:349px;font-size:10.8px;color:#d0d0d0">2025.09.03 15:49:53.962</div><div class="t" style="left:257px;width:100px;text-align:right;top:349px;font-size:10.6px;color:#d0d0d0">148.794</div><div class="t" style="left:377px;width:100px;text-align:right;top:349px;font-size:10.6px;color:#d0d0d0">148.795</div><div class="t" style="left:740px;width:100px;text-align:right;top:349px;font-size:10.6px;color:#d0d0d0">6</div><svg style="left:2px;top:369px" width="16" height="10"><path d="M1.5 4 L4.5 1 L7.5 4 L10.5 1 L13.5 4" fill="none" stroke="#e84040" stroke-width="1.2"/><path d="M1.5 8 L4.5 5 L7.5 8 L10.5 5 L13.5 8" fill="none" stroke="#3c82f0" stroke-width="1.2"/></svg><div class="t" style="left:21px;top:369px;font-size:10.8px;color:#d0d0d0">2025.09.03 15:49:52.761</div><div class="t" style="left:257px;width:100px;text-align:right;top:369px;font-size:10.6px;color:#d0d0d0">148.795</div><div class="t" style="left:377px;width:100px;text-align:right;top:369px;font-size:10.6px;color:#d0d0d0">148.796</div><div class="t" style="left:740px;width:100px;text-align:right;top:369px;font-size:10.6px;color:#d0d0d0">6</div><svg style="left:2px;top:389px" width="16" height="10"><path d="M1.5 4 L4.5 1 L7.5 4 L10.5 1 L13.5 4" fill="none" stroke="#e84040" stroke-width="1.2"/><path d="M1.5 8 L4.5 5 L7.5 8 L10.5 5 L13.5 8" fill="none" stroke="#3c82f0" stroke-width="1.2"/></svg><div class="t" style="left:21px;top:389px;font-size:10.8px;color:#d0d0d0">2025.09.03 15:49:52.570</div><div class="t" style="left:257px;width:100px;text-align:right;top:389px;font-size:10.6px;color:#d0d0d0">148.794</div><div class="t" style="left:377px;width:100px;text-align:right;top:389px;font-size:10.6px;color:#d0d0d0">148.795</div><div class="t" style="left:740px;width:100px;text-align:right;top:389px;font-size:10.6px;color:#d0d0d0">6</div><svg style="left:2px;top:409px" width="16" height="10"><path d="M1.5 4 L4.5 1 L7.5 4 L10.5 1 L13.5 4" fill="none" stroke="#e84040" stroke-width="1.2"/><path d="M1.5 8 L4.5 5 L7.5 8 L10.5 5 L13.5 8" fill="none" stroke="#3c82f0" stroke-width="1.2"/></svg><div class="t" style="left:21px;top:409px;font-size:10.8px;color:#d0d0d0">2025.09.03 15:49:49.964</div><div class="t" style="left:257px;width:100px;text-align:right;top:409px;font-size:10.6px;color:#d0d0d0">148.793</div><div class="t" style="left:377px;width:100px;text-align:right;top:409px;font-size:10.6px;color:#d0d0d0">148.794</div><div class="t" style="left:740px;width:100px;text-align:right;top:409px;font-size:10.6px;color:#d0d0d0">6</div><svg style="left:2px;top:429px" width="16" height="10"><path d="M1.5 4 L4.5 1 L7.5 4 L10.5 1 L13.5 4" fill="none" stroke="#e84040" stroke-width="1.2"/><path d="M1.5 8 L4.5 5 L7.5 8 L10.5 5 L13.5 8" fill="none" stroke="#3c82f0" stroke-width="1.2"/></svg><div class="t" style="left:21px;top:429px;font-size:10.8px;color:#d0d0d0">2025.09.03 15:49:49.363</div><div class="t" style="left:257px;width:100px;text-align:right;top:429px;font-size:10.6px;color:#d0d0d0">148.794</div><div class="t" style="left:377px;width:100px;text-align:right;top:429px;font-size:10.6px;color:#d0d0d0">148.795</div><div class="t" style="left:740px;width:100px;text-align:right;top:429px;font-size:10.6px;color:#d0d0d0">6</div><svg style="left:2px;top:449px" width="16" height="10"><path d="M1.5 4 L4.5 1 L7.5 4 L10.5 1 L13.5 4" fill="none" stroke="#e84040" stroke-width="1.2"/><path d="M1.5 8 L4.5 5 L7.5 8 L10.5 5 L13.5 8" fill="none" stroke="#3c82f0" stroke-width="1.2"/></svg><div class="t" style="left:21px;top:449px;font-size:10.8px;color:#d0d0d0">2025.09.03 15:49:49.165</div><div class="t" style="left:257px;width:100px;text-align:right;top:449px;font-size:10.6px;color:#d0d0d0">148.793</div><div class="t" style="left:377px;width:100px;text-align:right;top:449px;font-size:10.6px;color:#d0d0d0">148.794</div><div class="t" style="left:740px;width:100px;text-align:right;top:449px;font-size:10.6px;color:#d0d0d0">6</div><svg style="left:2px;top:469px" width="16" height="10"><path d="M1.5 4 L4.5 1 L7.5 4 L10.5 1 L13.5 4" fill="none" stroke="#e84040" stroke-width="1.2"/><path d="M1.5 8 L4.5 5 L7.5 8 L10.5 5 L13.5 8" fill="none" stroke="#3c82f0" stroke-width="1.2"/></svg><div class="t" style="left:21px;top:469px;font-size:10.8px;color:#d0d0d0">2025.09.03 15:49:48.362</div><div class="t" style="left:257px;width:100px;text-align:right;top:469px;font-size:10.6px;color:#d0d0d0">148.792</div><div class="t" style="left:377px;width:100px;text-align:right;top:469px;font-size:10.6px;color:#d0d0d0">148.793</div><div class="t" style="left:740px;width:100px;text-align:right;top:469px;font-size:10.6px;color:#d0d0d0">6</div><svg style="left:2px;top:489px" width="16" height="10"><path d="M1.5 4 L4.5 1 L7.5 4 L10.5 1 L13.5 4" fill="none" stroke="#e84040" stroke-width="1.2"/><path d="M1.5 8 L4.5 5 L7.5 8 L10.5 5 L13.5 8" fill="none" stroke="#3c82f0" stroke-width="1.2"/></svg><div class="t" style="left:21px;top:489px;font-size:10.8px;color:#d0d0d0">2025.09.03 15:49:48.164</div><div class="t" style="left:257px;width:100px;text-align:right;top:489px;font-size:10.6px;color:#d0d0d0">148.790</div><div class="t" style="left:377px;width:100px;text-align:right;top:489px;font-size:10.6px;color:#d0d0d0">148.791</div><div class="t" style="left:740px;width:100px;text-align:right;top:489px;font-size:10.6px;color:#d0d0d0">6</div><svg style="left:2px;top:509px" width="16" height="10"><path d="M1.5 4 L4.5 1 L7.5 4 L10.5 1 L13.5 4" fill="none" stroke="#e84040" stroke-width="1.2"/><path d="M1.5 8 L4.5 5 L7.5 8 L10.5 5 L13.5 8" fill="none" stroke="#3c82f0" stroke-width="1.2"/></svg><div class="t" style="left:21px;top:509px;font-size:10.8px;color:#d0d0d0">2025.09.03 15:49:47.766</div><div class="t" style="left:257px;width:100px;text-align:right;top:509px;font-size:10.6px;color:#d0d0d0">148.787</div><div class="t" style="left:377px;width:100px;text-align:right;top:509px;font-size:10.6px;color:#d0d0d0">148.788</div><div class="t" style="left:740px;width:100px;text-align:right;top:509px;font-size:10.6px;color:#d0d0d0">6</div><svg style="left:2px;top:529px" width="16" height="10"><path d="M1.5 4 L4.5 1 L7.5 4 L10.5 1 L13.5 4" fill="none" stroke="#e84040" stroke-width="1.2"/><path d="M1.5 8 L4.5 5 L7.5 8 L10.5 5 L13.5 8" fill="none" stroke="#3c82f0" stroke-width="1.2"/></svg><div class="t" style="left:21px;top:529px;font-size:10.8px;color:#d0d0d0">2025.09.03 15:49:46.564</div><div class="t" style="left:257px;width:100px;text-align:right;top:529px;font-size:10.6px;color:#d0d0d0">148.786</div><div class="t" style="left:377px;width:100px;text-align:right;top:529px;font-size:10.6px;color:#d0d0d0">148.787</div><div class="t" style="left:740px;width:100px;text-align:right;top:529px;font-size:10.6px;color:#d0d0d0">6</div><svg style="left:2px;top:549px" width="16" height="10"><path d="M1.5 4 L4.5 1 L7.5 4 L10.5 1 L13.5 4" fill="none" stroke="#e84040" stroke-width="1.2"/><path d="M1.5 8 L4.5 5 L7.5 8 L10.5 5 L13.5 8" fill="none" stroke="#3c82f0" stroke-width="1.2"/></svg><div class="t" style="left:21px;top:549px;font-size:10.8px;color:#d0d0d0">2025.09.03 15:49:46.362</div><div class="t" style="left:257px;width:100px;text-align:right;top:549px;font-size:10.6px;color:#d0d0d0">148.782</div><div class="t" style="left:377px;width:100px;text-align:right;top:549px;font-size:10.6px;color:#d0d0d0">148.783</div><div class="t" style="left:740px;width:100px;text-align:right;top:549px;font-size:10.6px;color:#d0d0d0">6</div><div class="ab" style="left:844px;top:0;width:17px;height:560px;background:#1b1b1b"></div><div class="ab" style="left:845px;top:17px;width:15px;height:17px;background:#555"></div><svg style="left:844px;top:4px" width="17" height="10"><path d="M5.6 7.4 L8.6 3.2 L11.6 7.4" fill="none" stroke="#6c6c6c" stroke-width="2.3"/></svg><svg style="left:844px;top:540px" width="17" height="10"><path d="M5.6 2.2 L8.6 6.4 L11.6 2.2" fill="none" stroke="#6c6c6c" stroke-width="2.3"/></svg>
</div>
<div class="ab" style="left:312px;top:795px;width:174px;height:24px;border:1px solid #9a9a9a;background:#303030"></div>
<div class="t" style="left:312px;top:802px;width:174px;text-align:center;font-size:11.5px;color:#f0f0f0">Export Ticks</div>
<div class="ab" style="left:493px;top:795px;width:174px;height:24px;border:1px solid #444;background:#2b2b2b"></div>
<div class="t" style="left:493px;top:802px;width:174px;text-align:center;font-size:11.5px;color:#7a7a7a">Import Ticks</div>
<div class="ab" style="left:674px;top:795px;width:174px;height:24px;border:1px solid #9a9a9a;background:#303030"></div>
<div class="t" style="left:674px;top:802px;width:174px;text-align:center;font-size:11.5px;color:#f0f0f0">Create Custom Symbol</div>
<div class="ab" style="left:1100px;top:795px;width:86px;height:24px;border:1px solid #e8e8e8;background:#303030"></div>
<div class="t" style="left:1100px;top:802px;width:86px;text-align:center;font-size:11.5px;color:#f0f0f0">OK</div>
<svg style="left:0;top:0" width="1206" height="827"><rect x="1195" y="818" width="2" height="2" fill="#bbb"/><rect x="1192" y="821" width="2" height="2" fill="#bbb"/><rect x="1195" y="821" width="2" height="2" fill="#bbb"/><rect x="1189" y="824" width="2" height="2" fill="#bbb"/><rect x="1192" y="824" width="2" height="2" fill="#bbb"/><rect x="1195" y="824" width="2" height="2" fill="#bbb"/></svg>
<svg style="left:0;top:0" width="1206" height="827">
<ellipse cx="102.5" cy="44.4" rx="31.8" ry="28.8" fill="none" stroke="#ed1c24" stroke-width="5.3"/>
<ellipse cx="723" cy="481.8" rx="178" ry="334" fill="none" stroke="#ed1c24" stroke-width="5.3"/>
</svg>
</body></html>
